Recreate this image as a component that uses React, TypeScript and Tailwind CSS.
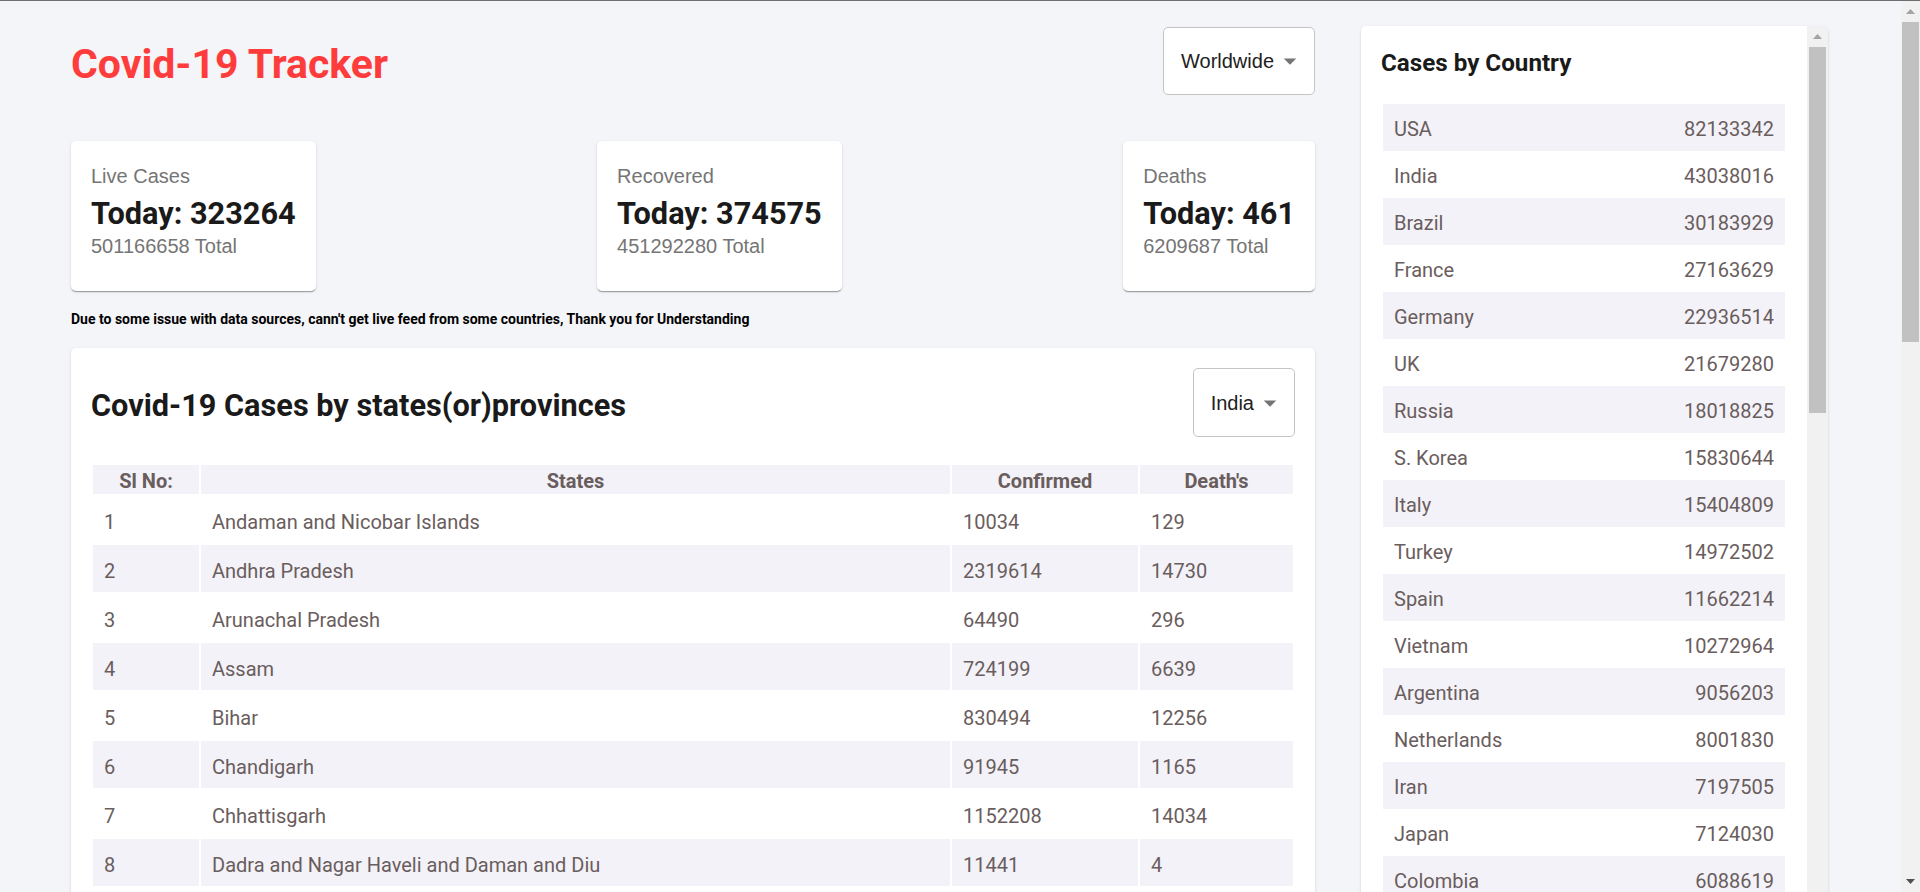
import React from "react";

const states = [
  { name: "Andaman and Nicobar Islands", confirmed: 10034, deaths: 129 },
  { name: "Andhra Pradesh", confirmed: 2319614, deaths: 14730 },
  { name: "Arunachal Pradesh", confirmed: 64490, deaths: 296 },
  { name: "Assam", confirmed: 724199, deaths: 6639 },
  { name: "Bihar", confirmed: 830494, deaths: 12256 },
  { name: "Chandigarh", confirmed: 91945, deaths: 1165 },
  { name: "Chhattisgarh", confirmed: 1152208, deaths: 14034 },
  { name: "Dadra and Nagar Haveli and Daman and Diu", confirmed: 11441, deaths: 4 },
  { name: "Delhi", confirmed: 1865112, deaths: 26160 },
  { name: "Goa", confirmed: 245343, deaths: 3832 },
];

const countries = [
  ["USA", 82133342],
  ["India", 43038016],
  ["Brazil", 30183929],
  ["France", 27163629],
  ["Germany", 22936514],
  ["UK", 21679280],
  ["Russia", 18018825],
  ["S. Korea", 15830644],
  ["Italy", 15404809],
  ["Turkey", 14972502],
  ["Spain", 11662214],
  ["Vietnam", 10272964],
  ["Argentina", 9056203],
  ["Netherlands", 8001830],
  ["Iran", 7197505],
  ["Japan", 7124030],
  ["Colombia", 6088619],
  ["Indonesia", 6050519],
] as const;

const stats = [
  { title: "Live Cases", today: 323264, total: 501166658 },
  { title: "Recovered", today: 374575, total: 451292280 },
  { title: "Deaths", today: 461, total: 6209687 },
];

const cardShadow =
  "shadow-[0_2px_1px_-1px_rgba(0,0,0,0.2),0_1px_1px_0_rgba(0,0,0,0.14),0_1px_3px_0_rgba(0,0,0,0.12)]";

function Dropdown({ value, height }: { value: string; height: string }) {
  return (
    <div
      className={`flex ${height} shrink-0 items-center rounded-[5px] border border-[#c4c4c4] bg-white pl-[17px] pr-[9px] font-['Liberation_Sans',Arial,sans-serif] text-[20px] text-[#212121]`}
    >
      <span>{value}</span>
      <svg viewBox="0 0 24 24" className="ml-px h-[30px] w-[30px] fill-[#757575]">
        <path d="M7 10l5 5 5-5z" />
      </svg>
    </div>
  );
}

function InfoBox({ title, today, total }: { title: string; today: number; total: number }) {
  return (
    <div className={`rounded-[5px] bg-white ${cardShadow}`}>
      <div className="px-[20px] pb-[30px] pt-[20px]">
        <p className="font-['Liberation_Sans',Arial,sans-serif] text-[20px] leading-[30px] text-[#757575]">
          {title}
        </p>
        <h2 className="h-[40px] pt-[3px] text-[30.7px] font-bold leading-[40px] text-[#1a1a1a]">
          Today: {today}
        </h2>
        <p className="font-['Liberation_Sans',Arial,sans-serif] text-[20px] leading-[30px] text-[#757575]">
          {total} Total
        </p>
      </div>
    </div>
  );
}

function Arrow({ down, color }: { down?: boolean; color: string }) {
  return (
    <svg width="9" height="5" viewBox="0 0 9 5" className={color}>
      {down ? <path d="M0 0h9L4.5 5z" /> : <path d="M0 5h9L4.5 0z" />}
    </svg>
  );
}

export default function App() {
  return (
    <div className="flex h-[892px] overflow-hidden border-t border-[#6e6e6e] bg-[#f4f5f8] font-['Segoe_UI',Roboto,sans-serif]">
      <main className="flex flex-1 items-start pl-[71px] pt-[25px]">
        {/* left column */}
        <div className="w-[1244px] shrink-0">
          <div className="mt-px flex items-start justify-between">
            <h1 className="mt-[11px] text-[41px] font-bold leading-[53px] text-[#ff3c3c]">
              Covid-19 Tracker
            </h1>
            <Dropdown value="Worldwide" height="h-[68px]" />
          </div>

          <div className="mt-[46px] flex justify-between">
            {stats.map((s) => (
              <InfoBox key={s.title} {...s} />
            ))}
          </div>

          <p className="mt-[20px] text-[14px] font-bold leading-[17px] text-black">
            Due to some issue with data sources, cann't get live feed from some countries, Thank you for
            Understanding
          </p>

          <div className={`mt-[20px] rounded-[5px] bg-white p-[20px] ${cardShadow}`}>
            <div className="flex items-start justify-between">
              <h2 className="mt-[18px] text-[30.7px] font-bold leading-[40px] text-[#1a1a1a]">
                Covid-19 Cases by states(or)provinces
              </h2>
              <Dropdown value="India" height="h-[69px]" />
            </div>

            <table className="mt-[26px] w-full table-fixed border-separate border-spacing-[2px] text-[20px] text-[#6a5d5d]">
              <thead>
                <tr className="bg-[#f3f2f8]">
                  <th className="h-[29px] w-[106px] px-0 pb-0 pt-[4px] font-bold leading-[25px]">Sl No:</th>
                  <th className="h-[29px] w-[749px] px-0 pb-0 pt-[4px] font-bold leading-[25px]">States</th>
                  <th className="h-[29px] w-[186px] px-0 pb-0 pt-[4px] font-bold leading-[25px]">Confirmed</th>
                  <th className="h-[29px] w-[153px] px-0 pb-0 pt-[4px] font-bold leading-[25px]">Death's</th>
                </tr>
              </thead>
              <tbody>
                {states.map((st, i) => (
                  <tr key={st.name} className={i % 2 === 1 ? "bg-[#f3f2f8]" : "bg-white"}>
                    <td className="h-[47px] px-[11px] pb-0 pt-[6px] leading-[27px]">{i + 1}</td>
                    <td className="h-[47px] px-[11px] pb-0 pt-[6px] leading-[27px]">{st.name}</td>
                    <td className="h-[47px] px-[11px] pb-0 pt-[6px] leading-[27px]">{st.confirmed}</td>
                    <td className="h-[47px] px-[11px] pb-0 pt-[6px] leading-[27px]">{st.deaths}</td>
                  </tr>
                ))}
              </tbody>
            </table>
          </div>
        </div>

        {/* right column */}
        <div className={`ml-[46px] flex h-[900px] w-[467px] shrink-0 overflow-hidden rounded-[5px] bg-white ${cardShadow}`}>
          <div className="flex-1 px-[20px] pt-[20px]">
            <h3 className="mt-[2px] text-[24.2px] font-bold leading-[31px] text-[#1a1a1a]">
              Cases by Country
            </h3>
            <div className="mx-[2px] mt-[25px] text-[20px] text-[#6a5d5d]">
              {countries.map(([country, cases], i) => (
                <div
                  key={country}
                  className={`flex justify-between px-[11px] pb-[8px] pt-[12px] leading-[27px] ${
                    i % 2 === 0 ? "bg-[#f3f2f8]" : "bg-white"
                  }`}
                >
                  <span>{country}</span>
                  <span>{cases}</span>
                </div>
              ))}
            </div>
          </div>
          <div className="flex w-[21px] flex-col items-center bg-[#f1f1f1]">
            <div className="flex h-[21px] items-center">
              <Arrow color="fill-[#a3a3a3]" />
            </div>
            <div className="h-[366px] w-[17px] bg-[#c1c1c1]" />
          </div>
        </div>
      </main>

      {/* page scrollbar */}
      <div className="flex w-[19px] shrink-0 flex-col items-center bg-[#f1f1f1]">
        <div className="flex h-[21px] items-center">
          <Arrow color="fill-[#a3a3a3]" />
        </div>
        <div className="h-[320px] w-[17px] bg-[#c1c1c1]" />
        <div className="flex-1" />
        <div className="flex h-[21px] items-center">
          <Arrow down color="fill-[#505050]" />
        </div>
      </div>
    </div>
  );
}
